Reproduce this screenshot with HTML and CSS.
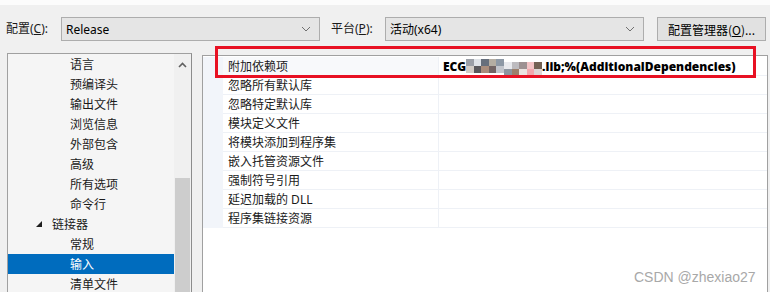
FILE: index.html
```html
<!DOCTYPE html>
<html>
<head>
    <meta charset="UTF-8" />
    <title>链接器 - 输入</title>
    <link rel="stylesheet" href="styles.css">
</head>
<body>

<div class="topline"></div>

<header class="toolbar">
  <label class="tlabel">配置(<u>C</u>):</label>
  <div class="combo combo1">
    <span>Release</span>
    <svg class="chev" width="10" height="6" viewBox="0 0 10 6"><path d="M1 1 L5 5 L9 1" fill="none" stroke="#707070" stroke-width="1"/></svg>
  </div>
  <label class="tlabel tlabel2">平台(<u>P</u>):</label>
  <div class="combo combo2">
    <span>活动(x64)</span>
    <svg class="chev" width="10" height="6" viewBox="0 0 10 6"><path d="M1 1 L5 5 L9 1" fill="none" stroke="#707070" stroke-width="1"/></svg>
  </div>
  <button class="button">配置管理器(<u>O</u>)...</button>
</header>

<section class="main">
  <nav class="tree">
    <ul class="items">
      <li class="lv2">语言</li>
      <li class="lv2">预编译头</li>
      <li class="lv2">输出文件</li>
      <li class="lv2">浏览信息</li>
      <li class="lv2">外部包含</li>
      <li class="lv2">高级</li>
      <li class="lv2">所有选项</li>
      <li class="lv2">命令行</li>
      <li class="lv1"><span class="tri"></span>链接器</li>
      <li class="lv2">常规</li>
      <li class="lv2 sel">输入</li>
      <li class="lv2">清单文件</li>
    </ul>
    <div class="scrollbar">
      <svg class="uparrow" width="9" height="6" viewBox="0 0 9 6"><path d="M1 5 L4.5 1.5 L8 5" fill="none" stroke="#606060" stroke-width="1.6"/></svg>
      <div class="thumb"></div>
    </div>
  </nav>

  <article class="grid">
    <div class="row first">
      <div class="gutter"></div>
      <div class="name">附加依赖项</div>
      <div class="value"><b>ECG</b><span class="mosaic"><i style="background:#8a8f98"></i><i style="background:#d9dde3"></i><i style="background:#4c5666"></i><i style="background:#a89f92"></i><i style="background:#7a8796"></i><i style="background:#c9c2bb"></i><i style="background:#3d3b40"></i><i style="background:#9b7a66"></i><i style="background:#5a4a4a"></i><i style="background:#b8bcc4"></i></span><span class="mosaic low"><i style="background:#e4e6ea"></i><i style="background:#b2b0b4"></i><i style="background:#8c7e80"></i><i style="background:#f1b9bc"></i><i style="background:#5b4636"></i><i style="background:#7a8390"></i><i style="background:#8b6b53"></i><i style="background:#e8e0dc"></i><i style="background:#f09aa0"></i><i style="background:#d9d0cf"></i></span><b>.lib;%(AdditionalDependencies)</b></div>
    </div>
    <div class="row"><div class="gutter"></div><div class="name">忽略所有默认库</div><div class="value"></div></div>
    <div class="row"><div class="gutter"></div><div class="name">忽略特定默认库</div><div class="value"></div></div>
    <div class="row"><div class="gutter"></div><div class="name">模块定义文件</div><div class="value"></div></div>
    <div class="row"><div class="gutter"></div><div class="name">将模块添加到程序集</div><div class="value"></div></div>
    <div class="row"><div class="gutter"></div><div class="name">嵌入托管资源文件</div><div class="value"></div></div>
    <div class="row"><div class="gutter"></div><div class="name">强制符号引用</div><div class="value"></div></div>
    <div class="row"><div class="gutter"></div><div class="name">延迟加载的 DLL</div><div class="value"></div></div>
    <div class="row"><div class="gutter"></div><div class="name">程序集链接资源</div><div class="value"></div></div>
  </article>
</section>

<!-- annotation + watermark on top of the screenshot -->
<div class="redbox"></div>
<div class="watermark">CSDN @zhexiao27</div>

</body>
</html>
```

FILE: styles.css
```css
* {
  box-sizing: border-box;
}

body {
  margin: 0;
  width: 770px;
  height: 292px;
  overflow: hidden;
  position: relative;
  background: #f0f0f0;
  font-family: "Noto Sans", "Noto Sans CJK SC", sans-serif;
  font-size: 12px;
  color: #1a1a1a;
}

.topline {
  height: 5px;
  background: #fcfcfc;
}

/* toolbar with the two combos */
.toolbar {
  display: flex;
  align-items: center;
  height: 24px;
  margin-top: 12px;
  padding-left: 6px;
}

.tlabel {
  width: 55px;
  line-height: 24px;
}
.tlabel2 {
  margin-left: 11px;
  width: 54px;
}

.combo {
  display: flex;
  align-items: center;
  justify-content: space-between;
  width: 259px;
  height: 24px;
  padding: 0 4px 0 4px;
  background: #e5e5e5;
  border: 1px solid #adadad;
  color: #000;
}
.combo .chev {
  margin-right: 4px;
}

.button {
  margin-left: 13px;
  width: 109px;
  height: 24px;
  padding: 0;
  background: #e1e1e1;
  border: 1px solid #adadad;
  font-family: "Noto Sans CJK SC", sans-serif;
  font-size: 12px;
  color: #000;
}

/* content area */
.main {
  display: flex;
  align-items: flex-start;
  margin-top: 12px;
}

.tree {
  display: flex;
  margin-left: 7px;
  width: 185px;
  height: 250px;
  background: #f5f5f5;
  border: 1px solid #a0a0a0;
  border-right-color: #8c8c8c;
  border-bottom: none;
}

.items {
  list-style-type: none;
  margin: 0;
  padding: 0;
  width: 166px;
}
.items li {
  height: 20px;
  line-height: 21px;
  white-space: nowrap;
}
.lv2 {
  padding-left: 62px;
}
.lv1 {
  display: flex;
  align-items: center;
  padding-left: 28px;
}
.tri {
  width: 0;
  height: 0;
  margin-right: 10px;
  border-left: 6px solid transparent;
  border-bottom: 6px solid #1e1e1e;
}
.sel {
  background: #006cbe;
  color: #fff;
}

.scrollbar {
  display: flex;
  flex-direction: column;
  align-items: center;
  width: 17px;
  background: #f0f0f0;
}
.uparrow {
  margin-top: 8px;
}
.thumb {
  margin-top: 110px;
  width: 15px;
  flex: 1;
  background: #cdcdcd;
}

.grid {
  margin-left: 10px;
  margin-top: 2px;
  width: 566px;
  height: 240px;
  padding-top: 1px;
  background: #fff;
  border: 1px solid #a0a0a0;
  border-bottom: none;
}

.row {
  display: flex;
  height: 19px;
}
.gutter {
  width: 20px;
  background: #f2f5fa;
}
.name {
  width: 215px;
  padding-left: 5px;
  line-height: 19px;
  border-bottom: 1px solid #eef1f6;
  white-space: nowrap;
}
.value {
  flex: 1;
  display: flex;
  align-items: center;
  padding-left: 4px;
  border-left: 1px solid #eef1f6;
  border-bottom: 1px solid #eef1f6;
  font-weight: bold;
  color: #000;
  white-space: nowrap;
}
.first .name {
  background: #f8f9fb;
}

.mosaic {
  display: inline-flex;
  flex-wrap: wrap;
  width: 38px;
  height: 14px;
  opacity: 0.85;
}
.mosaic i {
  display: block;
  width: 7.6px;
  height: 7px;
}
.mosaic.low {
  margin-top: 6px;
}

.redbox {
  position: absolute;
  left: 215px;
  top: 46px;
  width: 541px;
  height: 32px;
  border: 3px solid #e81123;
}

.watermark {
  position: absolute;
  left: 634px;
  top: 269px;
  font-family: "Liberation Sans", sans-serif;
  font-size: 14px;
  color: #a8a8a8;
}
```
